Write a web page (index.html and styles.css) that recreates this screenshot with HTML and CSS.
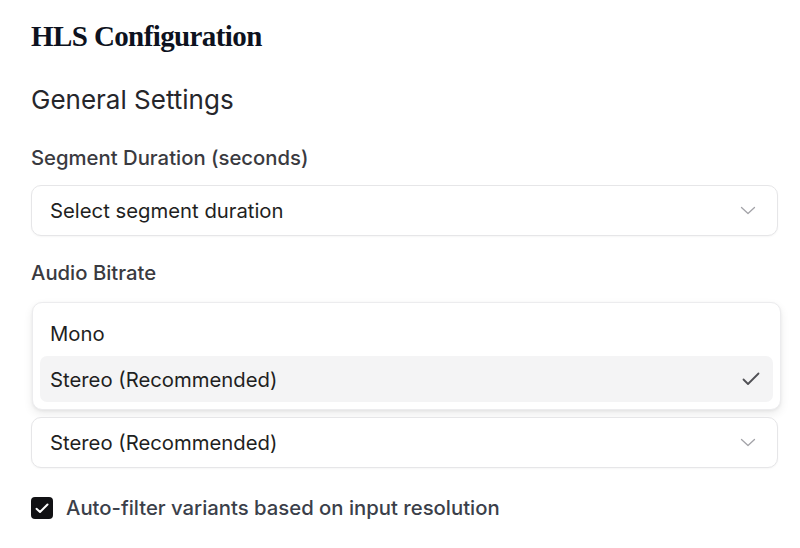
FILE: index.html
```html
<!DOCTYPE html>
<html lang="en">
<head>
<meta charset="utf-8">
<title>HLS Configuration</title>
<link rel="stylesheet" href="styles.css">
</head>
<body>
<main class="page">
  <h1 class="title">HLS Configuration</h1>
  <h2 class="section">General Settings</h2>

  <div class="field">
    <label class="label">Segment Duration (seconds)</label>
    <button class="select" type="button">
      <span class="select-value">Select segment duration</span>
      <svg class="chevron" width="16" height="16" viewBox="0 0 16 16" fill="none" stroke="currentColor" stroke-width="1.3" stroke-linecap="round" stroke-linejoin="round"><path d="M1.5 4.5 L8 10.5 L14.5 4.5"/></svg>
    </button>
  </div>

  <div class="field field-audio">
    <label class="label">Audio Bitrate</label>
    <div class="listbox" role="listbox">
      <div class="option" role="option">Mono</div>
      <div class="option option-selected" role="option" aria-selected="true">
        <span>Stereo (Recommended)</span>
        <svg class="check" width="18" height="14" viewBox="0 0 18 14" fill="none" stroke="currentColor" stroke-width="1.8" stroke-linecap="round" stroke-linejoin="round"><path d="M1.5 7.5 L6 12 L16.5 1.5"/></svg>
      </div>
    </div>
    <button class="select" type="button">
      <span class="select-value">Stereo (Recommended)</span>
      <svg class="chevron" width="16" height="16" viewBox="0 0 16 16" fill="none" stroke="currentColor" stroke-width="1.3" stroke-linecap="round" stroke-linejoin="round"><path d="M1.5 4.5 L8 10.5 L14.5 4.5"/></svg>
    </button>
  </div>

  <label class="checkbox-row">
    <span class="checkbox">
      <svg width="14" height="11" viewBox="0 0 14 11" fill="none" stroke="#fff" stroke-width="2" stroke-linecap="round" stroke-linejoin="round"><path d="M1.5 5.8 L5 9 L12.5 1.5"/></svg>
    </span>
    <span class="checkbox-text">Auto-filter variants based on input resolution</span>
  </label>
</main>
</body>
</html>
```

FILE: styles.css
```css
* { box-sizing: border-box; }

html, body {
  margin: 0;
  padding: 0;
  background: #ffffff;
}

body {
  font-family: Inter, "Noto Sans", sans-serif;
  color: #1f1f22;
}

.page {
  display: flex;
  flex-direction: column;
  padding: 18px 22px 0 31px;
}

.title {
  margin: 0;
  font-family: "Liberation Serif", "DejaVu Serif", serif;
  font-weight: 700;
  font-size: 29px;
  line-height: 36px;
  letter-spacing: -0.6px;
  color: #0d1220;
}

.section {
  margin: 30px 0 0;
  font-weight: 400;
  font-size: 26px;
  line-height: 32px;
  color: #26262b;
}

.field {
  display: flex;
  flex-direction: column;
}

.field:first-of-type { margin-top: 29px; }

.field-audio { margin-top: 24px; }

.label {
  font-size: 20.3px;
  line-height: 26px;
  font-weight: 450;
  color: #3a3a40;
}

.select {
  margin-top: 14px;
  display: flex;
  align-items: center;
  justify-content: space-between;
  height: 51px;
  padding: 0 21px 0 18px;
  border: 1px solid #e6e6e8;
  border-radius: 10px;
  background: #fff;
  font-family: inherit;
  font-size: 20.3px;
  color: #1f1f22;
  text-align: left;
  box-shadow: 0 1px 2px rgba(0,0,0,0.04);
}

.chevron { color: #a3a3a8; }

.listbox {
  margin: 16px -3px 0 1px;
  padding: 7px;
  border: 1px solid #ececee;
  border-radius: 10px;
  background: #fff;
  box-shadow: 0 4px 10px rgba(0,0,0,0.08), 0 1px 3px rgba(0,0,0,0.06);
}

.listbox + .select { margin-top: 7px; }

.option {
  display: flex;
  align-items: center;
  justify-content: space-between;
  height: 46px;
  padding: 0 13px 0 10px;
  border-radius: 7px;
  font-size: 20.3px;
  color: #1f1f22;
}

.option-selected { background: #f4f4f5; }

.check { color: #505055; }

.checkbox-row {
  margin-top: 27px;
  display: flex;
  align-items: center;
  gap: 13px;
}

.checkbox {
  width: 22px;
  height: 22px;
  border-radius: 4px;
  background: #111114;
  display: flex;
  align-items: center;
  justify-content: center;
}

.checkbox-text {
  font-size: 20.3px;
  line-height: 26px;
  font-weight: 450;
  color: #3b3f4a;
}
```
